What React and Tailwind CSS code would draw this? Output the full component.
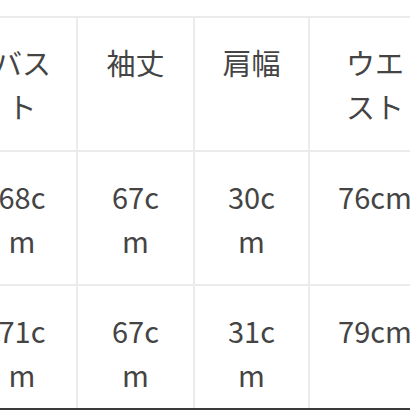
import React from 'react';

const headers = ['バスト', '袖丈', '肩幅', 'ウエスト'];

const rows = [
    ['68cm', '67cm', '30cm', '76cm'],
    ['71cm', '67cm', '31cm', '79cm'],
    ['70cm', '66cm', '31cm', '82cm'],
];

const cellClass =
    'border-2 border-[#ebebeb] px-6 py-[22px] text-center align-top break-all';

const App = () => {
    return (
        <div
            className="w-[410px] h-[410px] bg-white flex flex-col overflow-hidden text-[#444] text-[29px] leading-[44px]"
            style={{ fontFamily: '"Noto Sans CJK JP", "Noto Sans", sans-serif' }}
        >
            <div className="flex-1 overflow-hidden pt-4">
                <table className="table-fixed border-collapse w-[474px] -ml-[34px]">
                    <colgroup>
                        <col className="w-[110px]" />
                        <col className="w-[117px]" />
                        <col className="w-[115px]" />
                        <col className="w-[132px]" />
                    </colgroup>
                    <thead>
                        <tr>
                            {headers.map((h) => (
                                <th key={h} className={`${cellClass} font-normal`}>
                                    {h}
                                </th>
                            ))}
                        </tr>
                    </thead>
                    <tbody>
                        {rows.map((row, i) => (
                            <tr key={i}>
                                {row.map((v, j) => (
                                    <td key={j} className={cellClass}>
                                        {v}
                                    </td>
                                ))}
                            </tr>
                        ))}
                    </tbody>
                </table>
            </div>
            <div className="h-[2px] bg-[#3a3a3a]" />
        </div>
    );
};

export default App;
